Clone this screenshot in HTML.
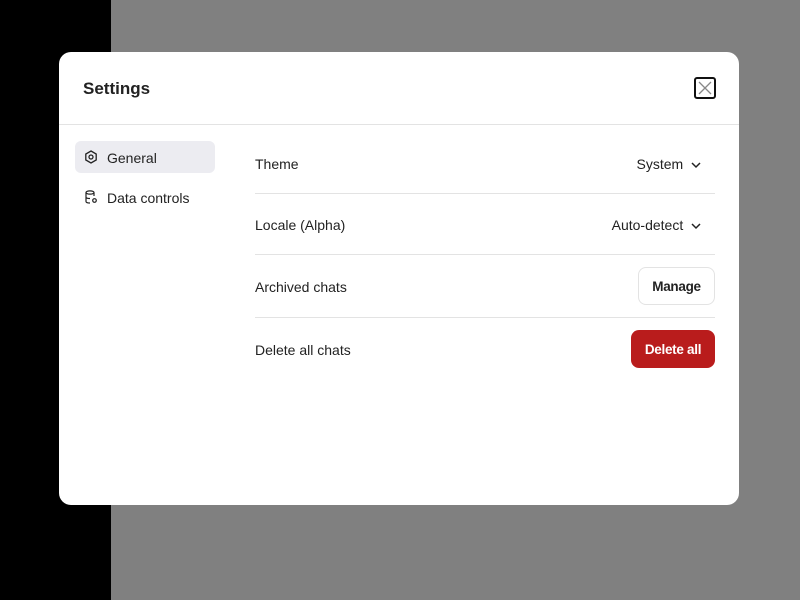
<!DOCTYPE html>
<html><head><style>
*{margin:0;padding:0;box-sizing:border-box}
body{width:800px;height:600px;background:#808080;font-family:"Liberation Sans",sans-serif;position:relative;overflow:hidden;color:#111}
.black{position:absolute;left:0;top:0;width:111px;height:600px;background:#000}
.modal{position:absolute;left:59px;top:52px;width:680px;height:453px;background:#fff;border-radius:12px}
.title{position:absolute;left:24px;top:27px;font-size:17px;font-weight:bold;color:#222}
.close{position:absolute;left:635px;top:25px;width:22px;height:22px;border:2px solid #111;border-radius:3px}
.hr{position:absolute;left:0;top:72px;width:680px;height:1px;background:#e3e3e3}
.nav{position:absolute;left:16px;width:140px;height:32px;border-radius:6px;font-size:14px;line-height:34px;padding-left:32px;color:#222}
.nav.act{background:#ececf1}
.nav svg{position:absolute;left:9px;top:9px}
.row{position:absolute;left:196px;width:460px;font-size:14px;color:#222}
.line{position:absolute;left:196px;width:460px;height:1px;background:#e3e3e3}
.r{position:absolute;right:0}
.btn{position:absolute;right:0;height:38px;border-radius:8px;font-size:13.5px;font-weight:bold;line-height:40px;text-align:center;letter-spacing:-0.3px}
</style></head><body>
<div class="black"></div>
<div class="modal">
<div class="title">Settings</div>
<div class="close"><svg width="18" height="18" viewBox="0 0 18 18" style="position:absolute;left:0;top:0"><path d="M3 3L15 15M15 3L3 15" stroke="#888" stroke-width="1.3"/></svg></div>
<div class="hr"></div>
<div class="nav act" style="top:89px"><svg width="14" height="14" viewBox="0 0 14 14"><path d="M7 1L12.2 4V10L7 13L1.8 10V4Z" fill="none" stroke="#222" stroke-width="1.3"/><circle cx="7" cy="7" r="2" fill="none" stroke="#222" stroke-width="1.3"/></svg>General</div>
<div class="nav" style="top:129px"><svg width="14" height="14" viewBox="0 0 14 14"><ellipse cx="6" cy="2.5" rx="4" ry="1.6" fill="none" stroke="#222" stroke-width="1.2"/><path d="M2 2.5V11.5C2 12.5 4 13 6 13M10 2.5V6M2 7C2 8 4 8.5 6 8.5" fill="none" stroke="#222" stroke-width="1.2"/><circle cx="10.5" cy="10.5" r="1.8" fill="none" stroke="#222" stroke-width="1.2"/></svg>Data controls</div>
<div class="row" style="top:104px">Theme<span class="r" style="right:14px">System &nbsp;<svg width="10" height="7" viewBox="0 0 10 7"><path d="M1 1L5 5L9 1" fill="none" stroke="#222" stroke-width="1.5"/></svg></span></div>
<div class="line" style="top:141px"></div>
<div class="row" style="top:165px">Locale (Alpha)<span class="r" style="right:14px">Auto-detect &nbsp;<svg width="10" height="7" viewBox="0 0 10 7"><path d="M1 1L5 5L9 1" fill="none" stroke="#222" stroke-width="1.5"/></svg></span></div>
<div class="line" style="top:202px"></div>
<div class="row" style="top:227px">Archived chats</div>
<div class="btn" style="right:24px;top:215px;width:77px;border:1px solid #e3e3e3;line-height:38px;color:#222">Manage</div>
<div class="line" style="top:265px"></div>
<div class="row" style="top:290px">Delete all chats</div>
<div class="btn" style="right:24px;top:278px;width:84px;background:#b91c1c;color:#fff">Delete all</div>
</div>
</body></html>
